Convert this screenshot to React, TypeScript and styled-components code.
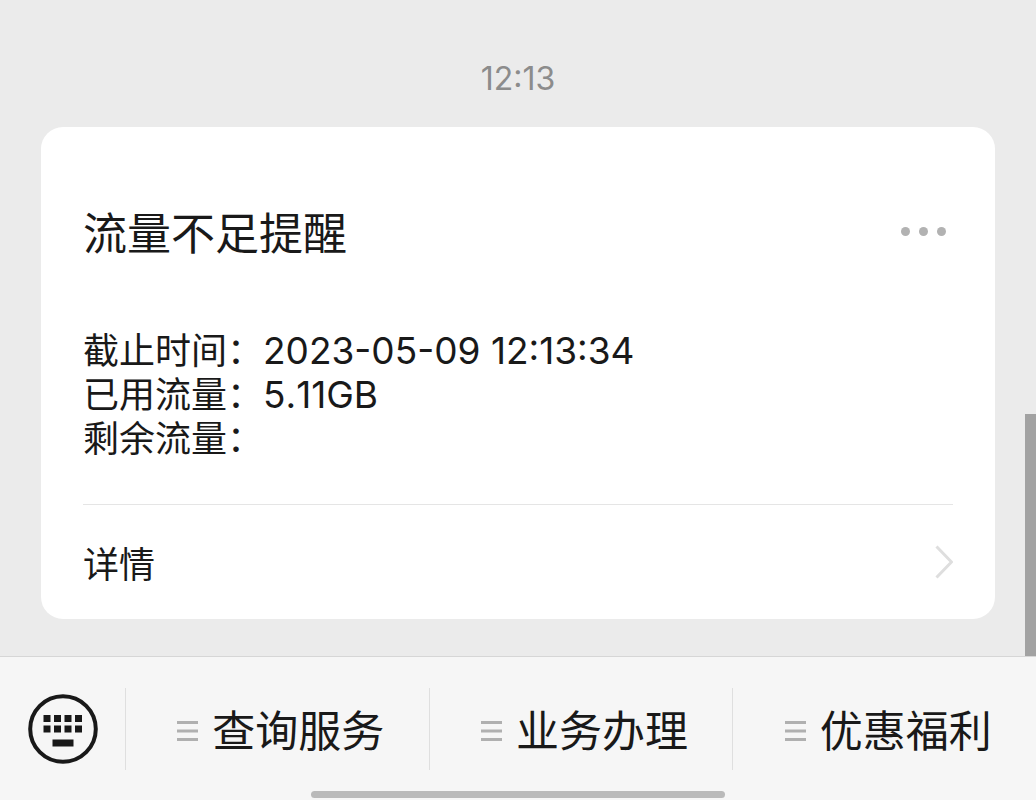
import React from "react";
import styled, { createGlobalStyle } from "styled-components";

const GlobalStyle = createGlobalStyle`
  *, *::before, *::after { box-sizing: border-box; }
  body {
    margin: 0;
    background: #ebebeb;
    color: #191919;
    font-family: Inter, "Noto Sans CJK SC", sans-serif;
  }
  button { border: 0; background: none; padding: 0; font: inherit; color: inherit; cursor: pointer; }
`;

const Page = styled.div`
  display: flex;
  flex-direction: column;
  min-height: 100vh;
`;

const Conversation = styled.main`
  position: relative;
  flex: 1;
  padding: 61px 41px 37px;
`;

const Timestamp = styled.time`
  display: block;
  margin-bottom: 30px;
  text-align: center;
  font-size: 32px;
  line-height: 36px;
  color: #8c8c8c;
`;

const Card = styled.article`
  padding: 0 42px;
  border-radius: 22px;
  background: #fff;
`;

const CardHeader = styled.header`
  display: flex;
  align-items: center;
  justify-content: space-between;
  padding-top: 75px;
`;

const Title = styled.h1`
  margin: 0;
  font-size: 44px;
  font-weight: 400;
  line-height: 64px;
`;

const MoreButton = styled.button`
  display: flex;
  gap: 9px;
  padding: 12px 7px 18px;
`;

const Dot = styled.span`
  width: 9px;
  height: 9px;
  border-radius: 50%;
  background: #b2b2b2;
`;

const Details = styled.dl`
  margin: 0;
  padding: 63px 0 43px;
  font-size: 36px;
  line-height: 44px;
`;

const DetailRow = styled.div`
  display: flex;
  min-height: 44px;
`;

const Label = styled.dt`
  flex: none;
`;

const Value = styled.dd`
  margin: 0;
  font-size: 37px;
  font-kerning: none;
`;

const DetailLink = styled.a`
  display: flex;
  align-items: center;
  justify-content: space-between;
  height: 115px;
  border-top: 1px solid #e5e5e5;
  color: inherit;
  font-size: 36px;
  text-decoration: none;
`;

const ScrollThumb = styled.div`
  position: absolute;
  right: 0;
  bottom: 0;
  width: 11px;
  height: 242px;
  background: #a2a2a2;
`;

const Footer = styled.footer`
  padding: 31px 0 2px;
  border-top: 1px solid #d6d6d6;
  background: #f6f6f6;
`;

const MenuBar = styled.nav`
  display: flex;
  height: 82px;
`;

const KeyboardButton = styled.button`
  display: flex;
  flex: none;
  align-items: center;
  justify-content: center;
  width: 125px;
`;

const MenuButton = styled.button`
  display: flex;
  flex: 1;
  align-items: center;
  justify-content: center;
  gap: 14px;
  padding: 4px 0 0 7px;
  border-left: 1px solid #dfdfdf;
  font-size: 43px;
  line-height: 64px;
  white-space: nowrap;
`;

const HomeIndicator = styled.div`
  width: 40%;
  height: 7px;
  margin: 21px auto 0;
  border-radius: 4px;
  background: #bababa;
`;

const KeyboardIcon = () => (
  <svg width="70" height="70" viewBox="0 0 70 70" aria-hidden="true">
    <circle cx="35" cy="35" r="32.8" fill="none" stroke="#191919" strokeWidth="4" />
    <g fill="#191919">
      {[21, 31.5].map((y) =>
        [15.5, 26, 36.5, 47].map((x) => (
          <rect key={`${x}-${y}`} x={x} y={y} width="7" height="7" />
        ))
      )}
      <rect x="24.5" y="45.5" width="21" height="7" />
    </g>
  </svg>
);

const MenuIcon = () => (
  <svg width="21" height="20" viewBox="0 0 21 20" aria-hidden="true">
    <path d="M0 1.5H21M0 10H21M0 18.5H21" stroke="#b0b0b0" strokeWidth="3" />
  </svg>
);

const ChevronIcon = () => (
  <svg width="18" height="34" viewBox="0 0 18 34" aria-hidden="true">
    <path d="M1.5 1.5L16.5 17L1.5 32.5" fill="none" stroke="#dedede" strokeWidth="3" />
  </svg>
);

const details = [
  { label: "截止时间：", value: "2023-05-09 12:13:34" },
  { label: "已用流量：", value: "5.11GB" },
  { label: "剩余流量：", value: "" },
];

const menus = ["查询服务", "业务办理", "优惠福利"];

export default function App() {
  return (
    <Page lang="zh-CN">
      <GlobalStyle />
      <Conversation>
        <Timestamp>12:13</Timestamp>
        <Card>
          <CardHeader>
            <Title>流量不足提醒</Title>
            <MoreButton type="button" aria-label="更多">
              <Dot />
              <Dot />
              <Dot />
            </MoreButton>
          </CardHeader>
          <Details>
            {details.map(({ label, value }) => (
              <DetailRow key={label}>
                <Label>{label}</Label>
                <Value>{value}</Value>
              </DetailRow>
            ))}
          </Details>
          <DetailLink href="#details">
            详情
            <ChevronIcon />
          </DetailLink>
        </Card>
        <ScrollThumb />
      </Conversation>
      <Footer>
        <MenuBar>
          <KeyboardButton type="button" aria-label="键盘">
            <KeyboardIcon />
          </KeyboardButton>
          {menus.map((name) => (
            <MenuButton key={name} type="button">
              <MenuIcon />
              {name}
            </MenuButton>
          ))}
        </MenuBar>
        <HomeIndicator />
      </Footer>
    </Page>
  );
}
